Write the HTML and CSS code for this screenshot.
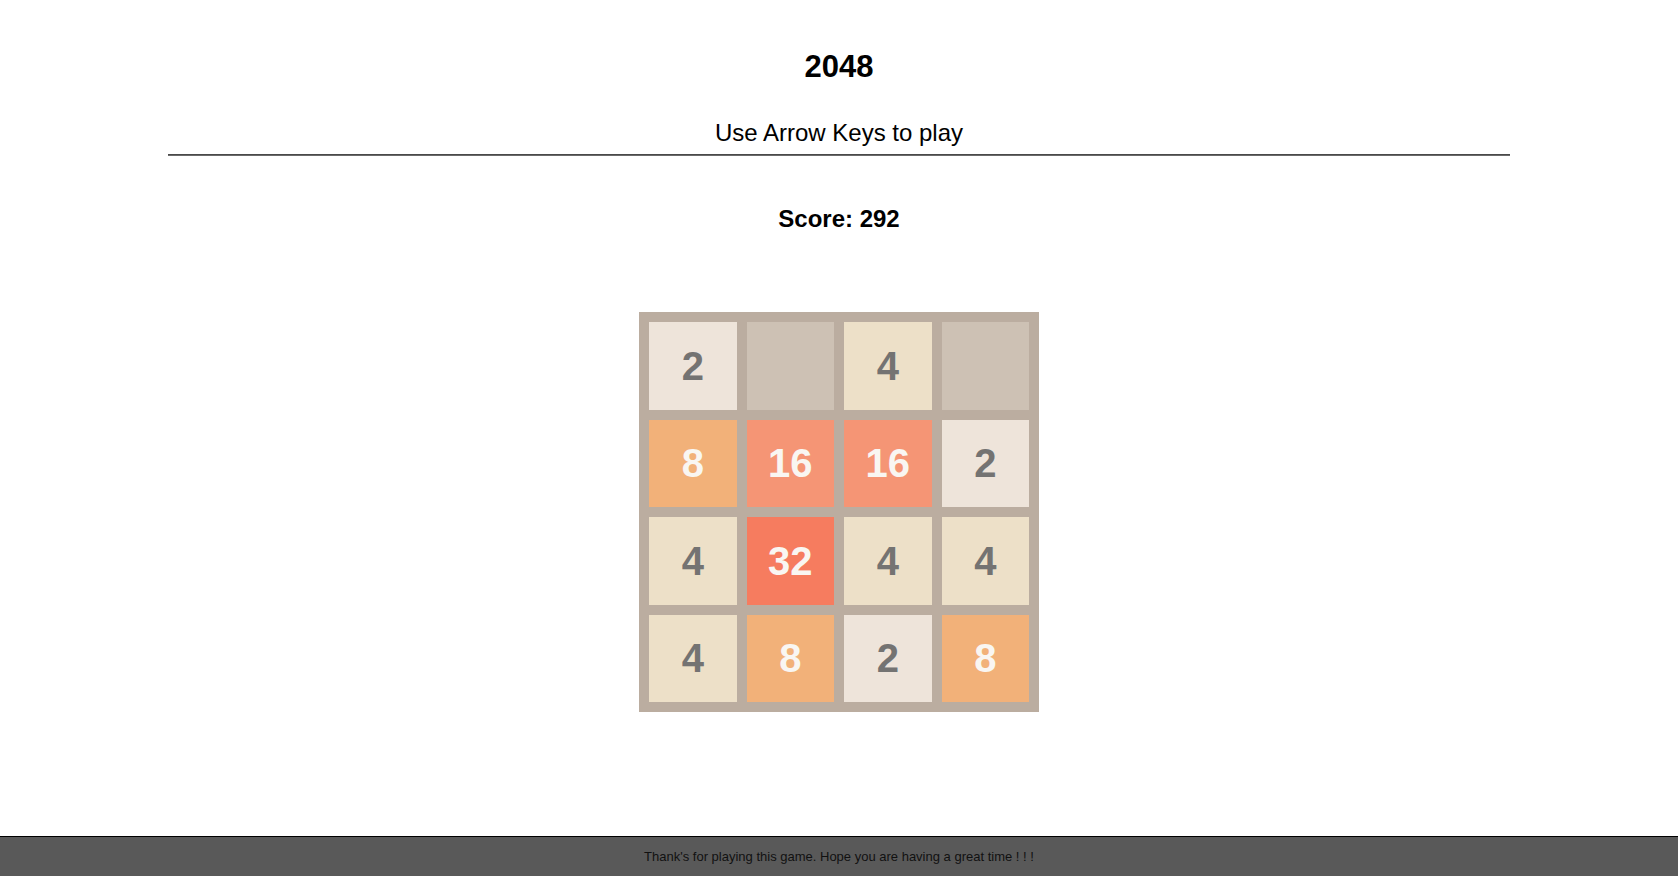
FILE: index.html
```html
<!DOCTYPE html>
<html lang="en">
<head>
<meta charset="utf-8">
<title>2048</title>
<link rel="stylesheet" href="styles.css">
</head>
<body>
  <main class="page">
    <h1 class="title">2048</h1>
    <p class="subtitle">Use Arrow Keys to play</p>
    <hr class="divider">
    <h2 class="score">Score: 292</h2>
    <div class="board">
      <div class="tile t2">2</div>
      <div class="tile empty"></div>
      <div class="tile t4">4</div>
      <div class="tile empty"></div>
      <div class="tile t8">8</div>
      <div class="tile t16">16</div>
      <div class="tile t16">16</div>
      <div class="tile t2">2</div>
      <div class="tile t4">4</div>
      <div class="tile t32">32</div>
      <div class="tile t4">4</div>
      <div class="tile t4">4</div>
      <div class="tile t4">4</div>
      <div class="tile t8">8</div>
      <div class="tile t2">2</div>
      <div class="tile t8">8</div>
    </div>
  </main>
  <footer class="footer">Thank's for playing this game. Hope you are having a great time ! ! !</footer>
</body>
</html>
```
FILE: styles.css
```css
html, body {
  margin: 0;
  padding: 0;
}
body {
  background: #ffffff;
  font-family: "Liberation Sans", Arial, sans-serif;
  color: #000;
  min-height: 100vh;
  display: flex;
  flex-direction: column;
}
.page {
  flex: 1;
  display: flex;
  flex-direction: column;
  align-items: center;
}
.title {
  margin: 50px 0 0;
  font-size: 31px;
  line-height: 34px;
  font-weight: bold;
}
.subtitle {
  margin: 35px 0 0;
  font-size: 24px;
  line-height: 28px;
  font-weight: normal;
}
.divider {
  width: 80%;
  margin: 7px 0 0;
  border: 0;
  border-top: 1px solid #4a4a4a;
  border-bottom: 1px solid #6a6a6a;
  height: 0;
}
.score {
  margin: 49px 0 0;
  font-size: 24px;
  line-height: 28px;
  font-weight: bold;
}
.board {
  margin-top: 79px;
  width: 400px;
  height: 400px;
  box-sizing: border-box;
  padding: 10px;
  background: #bbada0;
  display: grid;
  grid-template-columns: repeat(4, 1fr);
  grid-template-rows: repeat(4, 1fr);
  gap: 10px;
}
.tile {
  display: flex;
  align-items: center;
  justify-content: center;
  font-size: 40px;
  font-weight: bold;
  color: #747372;
  padding-top: 1px;
}
.empty { background: #cdc1b4; }
.t2 { background: #eee4da; }
.t4 { background: #ede0c8; }
.t8 { background: #f2b179; color: #f9f6f2; }
.t16 { background: #f59575; color: #f9f6f2; }
.t32 { background: #f67c5f; color: #f9f6f2; }
.footer {
  background: #595959;
  border-top: 1px solid #000;
  padding: 12px 0;
  font-size: 13px;
  line-height: 15px;
  text-align: center;
  color: #111;
}
```
